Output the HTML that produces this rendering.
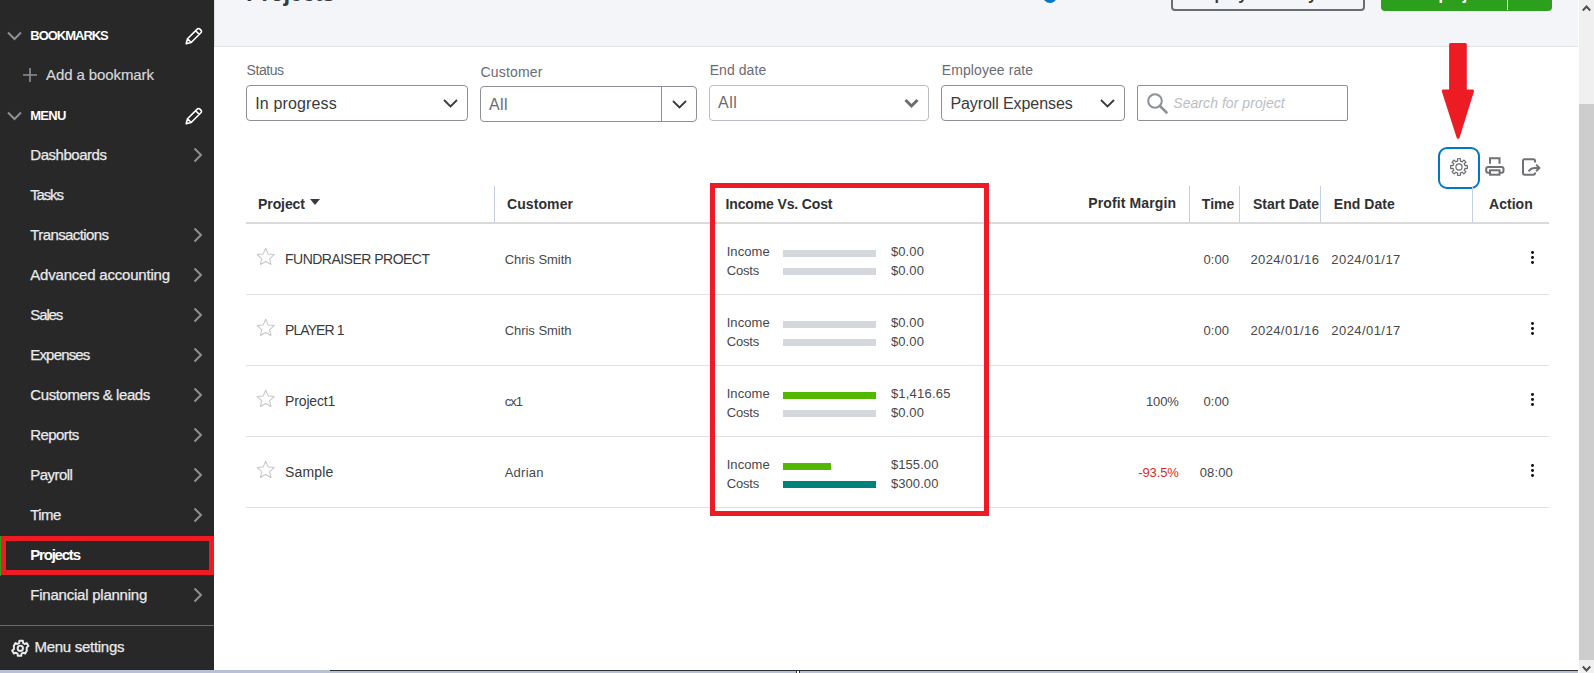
<!DOCTYPE html>
<html lang="en"><head><meta charset="utf-8"><title>Projects</title>
<style>
html,body{margin:0;padding:0;background:#fff;}
body{width:1594px;height:673px;overflow:hidden;font-family:"Liberation Sans",sans-serif;}
#app{position:relative;width:1594px;height:673px;overflow:hidden;background:#fff;}
#app *{box-sizing:border-box;}
.t{position:absolute;white-space:pre;display:block;}
.a{position:absolute;display:block;}
svg.a{overflow:visible;}
.sel{position:absolute;background:#fff;border:1px solid #8d9096;border-radius:4px;}
.hl{position:absolute;left:246px;width:1303px;height:1px;background:#e0e0e0;}
.vs{position:absolute;top:186px;width:1px;height:36px;background:#c3d1e8;}
.bar{position:absolute;left:783px;height:7px;width:93px;background:#d4d7dc;}
.red{position:absolute;border:5px solid #ed1c24;}

</style></head>
<body>
<div id="app">
<!-- page header band -->
<div class="a" style="left:214px;top:0;width:1364px;height:47px;background:#f4f5f8;border-bottom:1px solid #e1e3e6;border-left:1px solid #dfe1e5;"></div>

<!-- sidebar -->
<div class="a" style="left:0;top:0;width:214px;height:670px;background:#282828;"></div>
<div class="a" style="left:0;top:625px;width:214px;height:1px;background:#6b6c72;"></div>
<div class="a" style="left:0;top:536px;width:1px;height:40px;background:#2ca01c;"></div>

<!-- sidebar icons -->
<svg class="a" style="left:7px;top:31px" width="15" height="10" viewBox="0 0 15 10"><polyline points="1,1.5 7.5,8 14,1.5" fill="none" stroke="#8d9096" stroke-width="2"/></svg>
<svg class="a" style="left:7px;top:111px" width="15" height="10" viewBox="0 0 15 10"><polyline points="1,1.5 7.5,8 14,1.5" fill="none" stroke="#8d9096" stroke-width="2"/></svg>
<svg class="a" style="left:23px;top:68px" width="14" height="14" viewBox="0 0 14 14"><path d="M7 0v14M0 7h14" fill="none" stroke="#8d9096" stroke-width="1.6"/></svg>
<svg class="a pen" style="left:185px;top:27px" width="18" height="18" viewBox="0 0 18 18"><path d="M1.2 16.8l1.3-5L12.2 2.1a1.9 1.9 0 0 1 2.7 0l1 1a1.9 1.9 0 0 1 0 2.700L6.200 15.500zM2.500 11.800l3.700 3.700M10.600 3.700l3.700 3.700" fill="none" stroke="#ffffff" stroke-width="1.6" stroke-linejoin="round"/></svg>
<svg class="a pen" style="left:185px;top:107px" width="18" height="18" viewBox="0 0 18 18"><path d="M1.2 16.8l1.3-5L12.2 2.1a1.9 1.9 0 0 1 2.7 0l1 1a1.9 1.9 0 0 1 0 2.700L6.200 15.500zM2.500 11.800l3.700 3.700M10.600 3.700l3.700 3.700" fill="none" stroke="#ffffff" stroke-width="1.6" stroke-linejoin="round"/></svg>
<svg class="a" style="left:193px;top:147px" width="10" height="16" viewBox="0 0 10 16"><polyline points="1.500,1.500 8,8 1.500,14.500" fill="none" stroke="#8d9096" stroke-width="2"/></svg>
<svg class="a" style="left:193px;top:227px" width="10" height="16" viewBox="0 0 10 16"><polyline points="1.500,1.500 8,8 1.500,14.500" fill="none" stroke="#8d9096" stroke-width="2"/></svg>
<svg class="a" style="left:193px;top:267px" width="10" height="16" viewBox="0 0 10 16"><polyline points="1.500,1.500 8,8 1.500,14.500" fill="none" stroke="#8d9096" stroke-width="2"/></svg>
<svg class="a" style="left:193px;top:307px" width="10" height="16" viewBox="0 0 10 16"><polyline points="1.500,1.500 8,8 1.500,14.500" fill="none" stroke="#8d9096" stroke-width="2"/></svg>
<svg class="a" style="left:193px;top:347px" width="10" height="16" viewBox="0 0 10 16"><polyline points="1.500,1.500 8,8 1.500,14.500" fill="none" stroke="#8d9096" stroke-width="2"/></svg>
<svg class="a" style="left:193px;top:387px" width="10" height="16" viewBox="0 0 10 16"><polyline points="1.500,1.500 8,8 1.500,14.500" fill="none" stroke="#8d9096" stroke-width="2"/></svg>
<svg class="a" style="left:193px;top:427px" width="10" height="16" viewBox="0 0 10 16"><polyline points="1.500,1.500 8,8 1.500,14.500" fill="none" stroke="#8d9096" stroke-width="2"/></svg>
<svg class="a" style="left:193px;top:467px" width="10" height="16" viewBox="0 0 10 16"><polyline points="1.500,1.500 8,8 1.500,14.500" fill="none" stroke="#8d9096" stroke-width="2"/></svg>
<svg class="a" style="left:193px;top:507px" width="10" height="16" viewBox="0 0 10 16"><polyline points="1.500,1.500 8,8 1.500,14.500" fill="none" stroke="#8d9096" stroke-width="2"/></svg>
<svg class="a" style="left:193px;top:587px" width="10" height="16" viewBox="0 0 10 16"><polyline points="1.500,1.500 8,8 1.500,14.500" fill="none" stroke="#8d9096" stroke-width="2"/></svg>
<!-- menu settings gear -->
<svg class="a" style="left:9.600px;top:637.600px" width="20.600" height="20.600" viewBox="0 0 24 24"><g fill="none" stroke="#e8eaed" stroke-width="2.300" stroke-linejoin="round"><circle cx="12" cy="12" r="3.100"/><path d="M19.400 13a7.600 7.600 0 0 0 0-2l2.100-1.600-2-3.500-2.500 1a7.600 7.600 0 0 0-1.700-1L15 3.200h-4l-.4 2.700a7.600 7.600 0 0 0-1.700 1l-2.500-1-2 3.500L4.600 11a7.600 7.600 0 0 0 0 2l-2.100 1.600 2 3.500 2.500-1a7.600 7.600 0 0 0 1.700 1l.4 2.700h4l.4-2.700a7.600 7.600 0 0 0 1.700-1l2.500 1 2-3.500z"/></g></svg>

<!-- top-right header controls (clipped by viewport top) -->
<div class="a" style="left:1042.500px;top:-11px;width:14px;height:14px;border:3px solid #0077c5;border-radius:50%;"></div>
<div class="a" style="left:1171px;top:-26px;width:194px;height:37px;border:2px solid #6b6c72;border-radius:4px;"></div>
<div class="a" style="left:1381px;top:-26px;width:171px;height:37px;background:#2ca01c;border-radius:4px;"></div>
<div class="a" style="left:1507px;top:-26px;width:1px;height:36px;background:#fff;"></div>

<!-- scrollbar -->
<div class="a" style="left:1579px;top:0;width:15px;height:673px;background:#f0f0f0;"></div>
<div class="a" style="left:1579px;top:104px;width:15px;height:556px;background:#cdcdcd;"></div>
<svg class="a" style="left:1581px;top:4px" width="11" height="8" viewBox="0 0 11 8"><polyline points="1.800,6.500 5.500,2.500 9.200,6.500" fill="none" stroke="#505050" stroke-width="2"/></svg>
<svg class="a" style="left:1581px;top:665px" width="11" height="8" viewBox="0 0 11 8"><polyline points="1.800,1.500 5.500,5.500 9.200,1.500" fill="none" stroke="#505050" stroke-width="2"/></svg>

<!-- bottom strip -->
<div class="a" style="left:0;top:670px;width:1578px;height:3px;background:#b6c1d3;"></div>
<div class="a" style="left:330px;top:670px;width:1248px;height:1px;background:#2a2e35;"></div>
<div class="a" style="left:796px;top:670px;width:4px;height:3px;background:#fff;border:1px solid #2a2e35;border-bottom:0;"></div>

<!-- filters -->
<div class="sel" style="left:246px;top:85px;width:222px;height:36px;"></div>
<svg class="a" style="left:443px;top:99px" width="15" height="9" viewBox="0 0 15 9"><polyline points="1,1 7.500,7.500 14,1" fill="none" stroke="#393a3d" stroke-width="1.800"/></svg>
<div class="sel" style="left:480px;top:86px;width:217px;height:36px;"></div>
<div class="a" style="left:661px;top:86px;width:1px;height:36px;background:#8d9096;"></div>
<svg class="a" style="left:672px;top:100px" width="15" height="9" viewBox="0 0 15 9"><polyline points="1,1 7.500,7.500 14,1" fill="none" stroke="#393a3d" stroke-width="1.800"/></svg>
<div class="sel" style="left:709px;top:85px;width:220px;height:36px;border-color:#babec5;"></div>
<svg class="a" style="left:904px;top:98px" width="15" height="11" viewBox="0 0 15 11"><polyline points="1.500,2 7.500,8 13.500,2" fill="none" stroke="#6b6c72" stroke-width="3"/></svg>
<div class="sel" style="left:941px;top:85px;width:184px;height:36px;"></div>
<svg class="a" style="left:1100px;top:99px" width="15" height="9" viewBox="0 0 15 9"><polyline points="1,1 7.500,7.500 14,1" fill="none" stroke="#393a3d" stroke-width="1.800"/></svg>
<div class="sel" style="left:1137px;top:85px;width:211px;height:36px;border-radius:2px;"></div>
<svg class="a" style="left:1147px;top:93px" width="21" height="21" viewBox="0 0 21 21"><circle cx="8" cy="8" r="6.800" fill="none" stroke="#8d9096" stroke-width="2"/><path d="M13 13l6.500 6.500" stroke="#8d9096" stroke-width="2.600" stroke-linecap="round"/></svg>

<!-- red arrow -->
<svg class="a" style="left:1438px;top:40px" width="40" height="102" viewBox="1438 40 40 102"><path d="M1450.600 44.400H1465.300V91H1472.500L1458.100 137.300L1443.300 91H1450.600Z" fill="#ed1c24" stroke="#ed1c24" stroke-width="3" stroke-linejoin="round"/></svg>

<!-- toolbar icons -->
<div class="a" style="left:1438px;top:147px;width:42px;height:42px;border:2px solid #0077c5;border-radius:9px;background:#fff;"></div>
<svg class="a" style="left:1449px;top:156.700px" width="20" height="20" viewBox="0 0 20 20"><g fill="none" stroke="#6b6c72" stroke-width="1.200" stroke-linejoin="round"><circle cx="10" cy="10" r="3.100"/><path d="M8.63 4.06L8.47 1.74A8.4 8.4 0 0 1 11.53 1.74L11.37 4.06A6.1 6.1 0 0 1 13.23 4.83L14.76 3.08A8.4 8.4 0 0 1 16.92 5.24L15.17 6.77A6.1 6.1 0 0 1 15.94 8.63L18.26 8.47A8.4 8.4 0 0 1 18.26 11.53L15.94 11.37A6.1 6.1 0 0 1 15.17 13.23L16.92 14.76A8.4 8.4 0 0 1 14.76 16.92L13.23 15.17A6.1 6.1 0 0 1 11.37 15.94L11.53 18.26A8.4 8.4 0 0 1 8.47 18.26L8.63 15.94A6.1 6.1 0 0 1 6.77 15.17L5.24 16.92A8.4 8.4 0 0 1 3.08 14.76L4.83 13.23A6.1 6.1 0 0 1 4.06 11.37L1.74 11.53A8.4 8.4 0 0 1 1.74 8.47L4.06 8.63A6.1 6.1 0 0 1 4.83 6.77L3.08 5.24A8.4 8.4 0 0 1 5.24 3.08L6.77 4.83A6.1 6.1 0 0 1 8.63 4.06Z"/></g></svg>
<svg class="a" style="left:1484px;top:156px" width="22" height="21" viewBox="1484 156 22 21"><g fill="none" stroke="#707175" stroke-width="2"><path d="M1490 163.800V158.200H1499.500V163.800"/><rect x="1486.200" y="167" width="17.300" height="5.800" rx="2"/><rect x="1490" y="170.300" width="9.500" height="4.400" fill="#fff"/></g></svg>
<svg class="a" style="left:1521px;top:156px" width="21" height="21" viewBox="1521 156 21 21"><g fill="none" stroke="#707175" stroke-width="2"><path d="M1535 162.400V161a1.700 1.700 0 0 0-1.700-1.700H1524.700a1.700 1.700 0 0 0-1.700 1.700V173a1.700 1.700 0 0 0 1.700 1.700H1533.300a1.700 1.700 0 0 0 1.700-1.700V172.600"/><path d="M1528.700 171.500C1529.800 169.300 1531.800 167.900 1535 167.900L1538.500 167.900"/><path d="M1536.100 164.600L1539.400 167.900L1536.100 171.200"/></g></svg>

<!-- table -->
<div class="hl" style="top:222px;height:2px;background:#dadada;"></div>
<div class="hl" style="top:294px;"></div>
<div class="hl" style="top:365px;"></div>
<div class="hl" style="top:436px;"></div>
<div class="hl" style="top:507px;"></div>
<div class="vs" style="left:494px;"></div>
<div class="vs" style="left:1189px;"></div>
<div class="vs" style="left:1239px;"></div>
<div class="vs" style="left:1320px;"></div>
<div class="vs" style="left:1472px;"></div>
<div class="a" style="left:310px;top:199px;width:0;height:0;border-left:5px solid transparent;border-right:5px solid transparent;border-top:6px solid #393a3d;"></div>
<svg class="a" style="left:256.200px;top:247px" width="19.400" height="19.400" viewBox="0 0 18 18"><path d="M9 1.200l2.300 5.200 5.600.6-4.200 3.800 1.200 5.500L9 13.500l-4.900 2.800 1.200-5.500L1.100 7l5.600-.6z" fill="none" stroke="#c6c6c6" stroke-width="0.950" stroke-linejoin="round"/></svg>
<div class="bar" style="top:250px;"></div>
<div class="bar" style="top:268px;"></div>
<svg class="a" style="left:256.200px;top:318px" width="19.400" height="19.400" viewBox="0 0 18 18"><path d="M9 1.200l2.300 5.200 5.600.6-4.200 3.800 1.200 5.500L9 13.500l-4.900 2.800 1.200-5.500L1.100 7l5.600-.6z" fill="none" stroke="#c6c6c6" stroke-width="0.950" stroke-linejoin="round"/></svg>
<div class="bar" style="top:321px;"></div>
<div class="bar" style="top:339px;"></div>
<svg class="a" style="left:256.200px;top:389px" width="19.400" height="19.400" viewBox="0 0 18 18"><path d="M9 1.200l2.300 5.200 5.600.6-4.200 3.800 1.200 5.500L9 13.500l-4.900 2.800 1.200-5.500L1.100 7l5.600-.6z" fill="none" stroke="#c6c6c6" stroke-width="0.950" stroke-linejoin="round"/></svg>
<div class="bar" style="top:392px;"></div>
<div class="bar" style="top:392px;width:93px;background:#53b700;"></div>
<div class="bar" style="top:410px;"></div>
<svg class="a" style="left:256.200px;top:460px" width="19.400" height="19.400" viewBox="0 0 18 18"><path d="M9 1.200l2.300 5.200 5.600.6-4.200 3.800 1.200 5.500L9 13.500l-4.900 2.800 1.200-5.500L1.100 7l5.600-.6z" fill="none" stroke="#c6c6c6" stroke-width="0.950" stroke-linejoin="round"/></svg>
<div class="bar" style="top:463px;width:48px;background:#53b700;"></div>
<div class="bar" style="top:481px;"></div>
<div class="bar" style="top:481px;width:93px;background:#00827c;"></div>

<div class="a" style="left:1531.400px;top:250.8px;width:2.900px;height:2.900px;border-radius:50%;background:#111;"></div>
<div class="a" style="left:1531.400px;top:256.1px;width:2.900px;height:2.900px;border-radius:50%;background:#111;"></div>
<div class="a" style="left:1531.400px;top:261.4px;width:2.900px;height:2.900px;border-radius:50%;background:#111;"></div>
<div class="a" style="left:1531.400px;top:321.8px;width:2.900px;height:2.900px;border-radius:50%;background:#111;"></div>
<div class="a" style="left:1531.400px;top:327.1px;width:2.900px;height:2.900px;border-radius:50%;background:#111;"></div>
<div class="a" style="left:1531.400px;top:332.4px;width:2.900px;height:2.900px;border-radius:50%;background:#111;"></div>
<div class="a" style="left:1531.400px;top:392.8px;width:2.900px;height:2.900px;border-radius:50%;background:#111;"></div>
<div class="a" style="left:1531.400px;top:398.1px;width:2.900px;height:2.900px;border-radius:50%;background:#111;"></div>
<div class="a" style="left:1531.400px;top:403.4px;width:2.900px;height:2.900px;border-radius:50%;background:#111;"></div>
<div class="a" style="left:1531.400px;top:463.8px;width:2.900px;height:2.900px;border-radius:50%;background:#111;"></div>
<div class="a" style="left:1531.400px;top:469.1px;width:2.900px;height:2.900px;border-radius:50%;background:#111;"></div>
<div class="a" style="left:1531.400px;top:474.4px;width:2.900px;height:2.900px;border-radius:50%;background:#111;"></div>

<!-- red annotation boxes -->
<div class="red" style="left:710px;top:183px;width:279px;height:333px;"></div>
<div class="red" style="left:1px;top:536px;width:213px;height:39px;"></div>

<span class="t" id="t0" style="left:30.3px;top:29px;font-size:13px;line-height:13px;font-weight:700;color:#ffffff;letter-spacing:-1.021px;">BOOKMARKS</span>
<span class="t" id="t1" style="left:46.0px;top:67px;font-size:15px;line-height:15px;font-weight:400;color:#d4d7dc;letter-spacing:-0.095px;-webkit-text-stroke:0.2px #d4d7dc;">Add a bookmark</span>
<span class="t" id="t2" style="left:30.3px;top:109px;font-size:13px;line-height:13px;font-weight:700;color:#ffffff;letter-spacing:-0.760px;">MENU</span>
<span class="t" id="t3" style="left:30.3px;top:147px;font-size:15px;line-height:15px;font-weight:400;color:#e8eaed;letter-spacing:-0.466px;-webkit-text-stroke:0.25px #e8eaed;">Dashboards</span>
<span class="t" id="t4" style="left:30.3px;top:187px;font-size:15px;line-height:15px;font-weight:400;color:#e8eaed;letter-spacing:-1.186px;-webkit-text-stroke:0.25px #e8eaed;">Tasks</span>
<span class="t" id="t5" style="left:30.3px;top:227px;font-size:15px;line-height:15px;font-weight:400;color:#e8eaed;letter-spacing:-0.592px;-webkit-text-stroke:0.25px #e8eaed;">Transactions</span>
<span class="t" id="t6" style="left:30.3px;top:267px;font-size:15px;line-height:15px;font-weight:400;color:#e8eaed;letter-spacing:-0.208px;-webkit-text-stroke:0.25px #e8eaed;">Advanced accounting</span>
<span class="t" id="t7" style="left:30.3px;top:307px;font-size:15px;line-height:15px;font-weight:400;color:#e8eaed;letter-spacing:-1.133px;-webkit-text-stroke:0.25px #e8eaed;">Sales</span>
<span class="t" id="t8" style="left:30.3px;top:347px;font-size:15px;line-height:15px;font-weight:400;color:#e8eaed;letter-spacing:-0.839px;-webkit-text-stroke:0.25px #e8eaed;">Expenses</span>
<span class="t" id="t9" style="left:30.3px;top:387px;font-size:15px;line-height:15px;font-weight:400;color:#e8eaed;letter-spacing:-0.420px;-webkit-text-stroke:0.25px #e8eaed;">Customers &amp; leads</span>
<span class="t" id="t10" style="left:30.3px;top:427px;font-size:15px;line-height:15px;font-weight:400;color:#e8eaed;letter-spacing:-0.589px;-webkit-text-stroke:0.25px #e8eaed;">Reports</span>
<span class="t" id="t11" style="left:30.3px;top:467px;font-size:15px;line-height:15px;font-weight:400;color:#e8eaed;letter-spacing:-0.560px;-webkit-text-stroke:0.25px #e8eaed;">Payroll</span>
<span class="t" id="t12" style="left:30.3px;top:507px;font-size:15px;line-height:15px;font-weight:400;color:#e8eaed;letter-spacing:-0.594px;-webkit-text-stroke:0.25px #e8eaed;">Time</span>
<span class="t" id="t13" style="left:30.3px;top:547px;font-size:15px;line-height:15px;font-weight:700;color:#ffffff;letter-spacing:-1.215px;">Projects</span>
<span class="t" id="t14" style="left:30.3px;top:587px;font-size:15px;line-height:15px;font-weight:400;color:#e8eaed;letter-spacing:-0.231px;-webkit-text-stroke:0.25px #e8eaed;">Financial planning</span>
<span class="t" id="t15" style="left:34.5px;top:639px;font-size:15px;line-height:15px;font-weight:400;color:#e8eaed;letter-spacing:-0.283px;-webkit-text-stroke:0.25px #e8eaed;">Menu settings</span>
<span class="t" id="t16" style="left:246.0px;top:-19px;font-size:24px;line-height:24px;font-weight:700;color:#393a3d;letter-spacing:-0.817px;">Projects</span>
<span class="t" id="t17" style="left:1190.0px;top:-13px;font-size:16px;line-height:16px;font-weight:700;color:#393a3d;letter-spacing:-0.143px;">Employee hourly rate</span>
<span class="t" id="t18" style="left:1403.0px;top:-13px;font-size:16px;line-height:16px;font-weight:700;color:#ffffff;letter-spacing:-0.469px;">New project</span>
<span class="t" id="t19" style="left:246.5px;top:63px;font-size:14px;line-height:14px;font-weight:400;color:#6b6c72;letter-spacing:-0.421px;">Status</span>
<span class="t" id="t20" style="left:480.5px;top:65px;font-size:14px;line-height:14px;font-weight:400;color:#6b6c72;letter-spacing:0.188px;">Customer</span>
<span class="t" id="t21" style="left:709.7px;top:63px;font-size:14px;line-height:14px;font-weight:400;color:#6b6c72;letter-spacing:0.062px;">End date</span>
<span class="t" id="t22" style="left:941.8px;top:63px;font-size:14px;line-height:14px;font-weight:400;color:#6b6c72;letter-spacing:0.085px;">Employee rate</span>
<span class="t" id="t23" style="left:255.2px;top:96px;font-size:16px;line-height:16px;font-weight:400;color:#393a3d;letter-spacing:0.145px;">In progress</span>
<span class="t" id="t24" style="left:489.0px;top:97px;font-size:16px;line-height:16px;font-weight:400;color:#6b6c72;letter-spacing:0.409px;">All</span>
<span class="t" id="t25" style="left:718.0px;top:95px;font-size:16px;line-height:16px;font-weight:400;color:#6b6c72;letter-spacing:0.459px;">All</span>
<span class="t" id="t26" style="left:950.4px;top:96px;font-size:16px;line-height:16px;font-weight:400;color:#393a3d;letter-spacing:-0.088px;">Payroll Expenses</span>
<span class="t" id="t27" style="left:1173.3px;top:96px;font-size:14px;line-height:14px;font-weight:400;color:#babec5;letter-spacing:0.053px;font-style:italic;">Search for project</span>
<span class="t" id="t28" style="left:258.0px;top:197px;font-size:14px;line-height:14px;font-weight:700;color:#2f3033;letter-spacing:-0.078px;">Project</span>
<span class="t" id="t29" style="left:507.0px;top:197px;font-size:14px;line-height:14px;font-weight:700;color:#2f3033;letter-spacing:0.092px;">Customer</span>
<span class="t" id="t30" style="left:725.5px;top:197px;font-size:14px;line-height:14px;font-weight:700;color:#2f3033;letter-spacing:-0.137px;">Income Vs. Cost</span>
<span class="t" id="t31" style="left:1088.2px;top:196px;font-size:14px;line-height:14px;font-weight:700;color:#2f3033;letter-spacing:0.121px;">Profit Margin</span>
<span class="t" id="t32" style="left:1201.8px;top:197px;font-size:14px;line-height:14px;font-weight:700;color:#2f3033;letter-spacing:0.054px;">Time</span>
<span class="t" id="t33" style="left:1253.0px;top:197px;font-size:14px;line-height:14px;font-weight:700;color:#2f3033;letter-spacing:-0.016px;">Start Date</span>
<span class="t" id="t34" style="left:1333.8px;top:197px;font-size:14px;line-height:14px;font-weight:700;color:#2f3033;letter-spacing:0.030px;">End Date</span>
<span class="t" id="t35" style="left:1489.0px;top:197px;font-size:14px;line-height:14px;font-weight:700;color:#2f3033;letter-spacing:0.028px;">Action</span>
<span class="t" id="t36" style="left:285.0px;top:252px;font-size:14px;line-height:14px;font-weight:400;color:#393a3d;letter-spacing:-0.515px;">FUNDRAISER PROECT</span>
<span class="t" id="t37" style="left:504.7px;top:253px;font-size:13px;line-height:13px;font-weight:400;color:#46474c;letter-spacing:-0.039px;">Chris Smith</span>
<span class="t" id="t38" style="left:726.7px;top:245px;font-size:13px;line-height:13px;font-weight:400;color:#46474c;letter-spacing:0.072px;">Income</span>
<span class="t" id="t39" style="left:726.7px;top:264px;font-size:13px;line-height:13px;font-weight:400;color:#46474c;letter-spacing:-0.184px;">Costs</span>
<span class="t" id="t40" style="left:890.9px;top:245px;font-size:13px;line-height:13px;font-weight:400;color:#46474c;letter-spacing:0.113px;">$0.00</span>
<span class="t" id="t41" style="left:890.9px;top:264px;font-size:13px;line-height:13px;font-weight:400;color:#46474c;letter-spacing:0.113px;">$0.00</span>
<span class="t" id="t42" style="left:1203.4px;top:253px;font-size:13px;line-height:13px;font-weight:400;color:#46474c;letter-spacing:0.129px;">0:00</span>
<span class="t" id="t43" style="left:1250.4px;top:253px;font-size:13px;line-height:13px;font-weight:400;color:#46474c;letter-spacing:0.391px;">2024/01/16</span>
<span class="t" id="t44" style="left:1331.3px;top:253px;font-size:13px;line-height:13px;font-weight:400;color:#46474c;letter-spacing:0.436px;">2024/01/17</span>
<span class="t" id="t45" style="left:285.0px;top:323px;font-size:14px;line-height:14px;font-weight:400;color:#393a3d;letter-spacing:-0.913px;">PLAYER 1</span>
<span class="t" id="t46" style="left:504.7px;top:324px;font-size:13px;line-height:13px;font-weight:400;color:#46474c;letter-spacing:-0.039px;">Chris Smith</span>
<span class="t" id="t47" style="left:726.7px;top:316px;font-size:13px;line-height:13px;font-weight:400;color:#46474c;letter-spacing:0.072px;">Income</span>
<span class="t" id="t48" style="left:726.7px;top:335px;font-size:13px;line-height:13px;font-weight:400;color:#46474c;letter-spacing:-0.184px;">Costs</span>
<span class="t" id="t49" style="left:890.9px;top:316px;font-size:13px;line-height:13px;font-weight:400;color:#46474c;letter-spacing:0.113px;">$0.00</span>
<span class="t" id="t50" style="left:890.9px;top:335px;font-size:13px;line-height:13px;font-weight:400;color:#46474c;letter-spacing:0.113px;">$0.00</span>
<span class="t" id="t51" style="left:1203.4px;top:324px;font-size:13px;line-height:13px;font-weight:400;color:#46474c;letter-spacing:0.129px;">0:00</span>
<span class="t" id="t52" style="left:1250.4px;top:324px;font-size:13px;line-height:13px;font-weight:400;color:#46474c;letter-spacing:0.391px;">2024/01/16</span>
<span class="t" id="t53" style="left:1331.3px;top:324px;font-size:13px;line-height:13px;font-weight:400;color:#46474c;letter-spacing:0.436px;">2024/01/17</span>
<span class="t" id="t54" style="left:285.0px;top:394px;font-size:14px;line-height:14px;font-weight:400;color:#393a3d;letter-spacing:-0.137px;">Project1</span>
<span class="t" id="t55" style="left:504.7px;top:395px;font-size:13px;line-height:13px;font-weight:400;color:#46474c;letter-spacing:-0.967px;">cx1</span>
<span class="t" id="t56" style="left:726.7px;top:387px;font-size:13px;line-height:13px;font-weight:400;color:#46474c;letter-spacing:0.072px;">Income</span>
<span class="t" id="t57" style="left:726.7px;top:406px;font-size:13px;line-height:13px;font-weight:400;color:#46474c;letter-spacing:-0.184px;">Costs</span>
<span class="t" id="t58" style="left:890.9px;top:387px;font-size:13px;line-height:13px;font-weight:400;color:#46474c;letter-spacing:0.207px;">$1,416.65</span>
<span class="t" id="t59" style="left:890.9px;top:406px;font-size:13px;line-height:13px;font-weight:400;color:#46474c;letter-spacing:0.113px;">$0.00</span>
<span class="t" id="t60" style="left:1146.0px;top:395px;font-size:13px;line-height:13px;font-weight:400;color:#46474c;letter-spacing:-0.117px;">100%</span>
<span class="t" id="t61" style="left:1203.4px;top:395px;font-size:13px;line-height:13px;font-weight:400;color:#46474c;letter-spacing:0.129px;">0:00</span>
<span class="t" id="t62" style="left:285.0px;top:465px;font-size:14px;line-height:14px;font-weight:400;color:#393a3d;letter-spacing:0.166px;">Sample</span>
<span class="t" id="t63" style="left:504.7px;top:466px;font-size:13px;line-height:13px;font-weight:400;color:#46474c;letter-spacing:0.264px;">Adrian</span>
<span class="t" id="t64" style="left:726.7px;top:458px;font-size:13px;line-height:13px;font-weight:400;color:#46474c;letter-spacing:0.072px;">Income</span>
<span class="t" id="t65" style="left:726.7px;top:477px;font-size:13px;line-height:13px;font-weight:400;color:#46474c;letter-spacing:-0.184px;">Costs</span>
<span class="t" id="t66" style="left:890.9px;top:458px;font-size:13px;line-height:13px;font-weight:400;color:#46474c;letter-spacing:0.083px;">$155.00</span>
<span class="t" id="t67" style="left:890.9px;top:477px;font-size:13px;line-height:13px;font-weight:400;color:#46474c;letter-spacing:0.083px;">$300.00</span>
<span class="t" id="t68" style="left:1138.3px;top:466px;font-size:13px;line-height:13px;font-weight:400;color:#d52b1e;letter-spacing:-0.121px;">-93.5%</span>
<span class="t" id="t69" style="left:1199.8px;top:466px;font-size:13px;line-height:13px;font-weight:400;color:#46474c;letter-spacing:0.088px;">08:00</span>
</div>
</body></html>
